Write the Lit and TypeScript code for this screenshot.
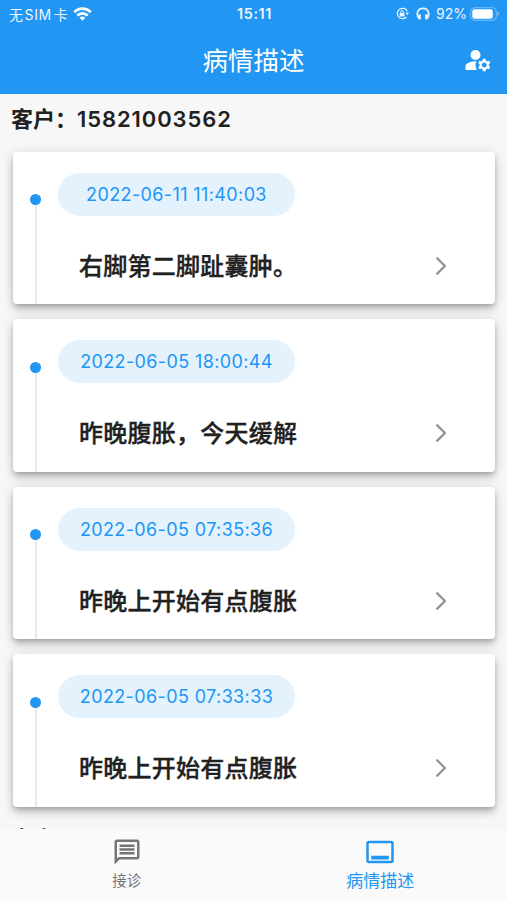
import { LitElement, html, css, svg } from "lit";
import { customElement, property } from "lit/decorators.js";

interface Entry {
  time: string;
  text: string;
}

const ENTRIES: Entry[] = [
  { time: "2022-06-11 11:40:03", text: "右脚第二脚趾囊肿。" },
  { time: "2022-06-05 18:00:44", text: "昨晚腹胀，今天缓解" },
  { time: "2022-06-05 07:35:36", text: "昨晚上开始有点腹胀" },
  { time: "2022-06-05 07:33:33", text: "昨晚上开始有点腹胀" },
];

const icon = (size: number, body: unknown) => html`
  <svg width=${size} height=${size} viewBox="0 0 24 24" fill="currentColor">${body}</svg>
`;

const manageAccounts = svg`
  <circle cx="10" cy="8" r="4"/>
  <path d="M10.67 13.02C10.45 13.01 10.23 13 10 13c-2.42 0-4.68.67-6.61 1.82C2.51 15.34 2 16.32 2 17.35V20h9.26C10.47 18.87 10 17.49 10 16c0-1.07.25-2.07.67-2.98z"/>
  <path d="M20.75 16c0-.22-.03-.42-.06-.63l1.14-1.01-1-1.73-1.45.49c-.32-.27-.68-.48-1.08-.63L18 11h-2l-.3 1.49c-.4.15-.76.36-1.08.63l-1.45-.49-1 1.73 1.14 1.01c-.03.21-.06.41-.06.63s.03.42.06.63l-1.14 1.01 1 1.73 1.45-.49c.32.27.68.48 1.08.63L16 21h2l.3-1.49c.4-.15.76-.36 1.08-.63l1.45.49 1-1.73-1.14-1.01c.03-.21.06-.41.06-.63zM17 18c-1.1 0-2-.9-2-2s.9-2 2-2 2 .9 2 2-.9 2-2 2z"/>`;

const message = svg`<path d="M4 4h16v12H5.17L4 17.17V4m0-2c-1.1 0-1.99.9-1.99 2L2 22l4-4h14c1.1 0 2-.9 2-2V4c0-1.1-.9-2-2-2H4zm2 10h12v2H6v-2zm0-3h12v2H6V9zm0-3h12v2H6V6z"/>`;

const callToAction = svg`<path d="M21 3H3c-1.1 0-2 .9-2 2v14c0 1.1.9 2 2 2h18c1.1 0 2-.9 2-2V5c0-1.1-.9-2-2-2zm0 16H3V5h18v14zM5 15h14v3H5z"/>`;

const chevron = svg`<path d="M6.23 20.23 8 22l10-10L8 2 6.23 3.77 14.46 12z"/>`;

@customElement("status-bar")
export class StatusBar extends LitElement {
  static styles = css`
    :host {
      display: grid;
      grid-template-columns: 1fr auto 1fr;
      align-items: center;
      height: 27px;
      padding: 0 7px 0 9px;
      font-size: 14px;
      color: #eaf5ff;
    }
    .side {
      display: flex;
      align-items: center;
    }
    .carrier {
      letter-spacing: 0.6px;
      margin-right: 5px;
    }
    .sim {
      margin: 0 2px 0 1px;
    }
    .time {
      font-weight: 600;
      font-size: 14.5px;
      letter-spacing: 0.55px;
    }
    .right {
      justify-content: flex-end;
    }
    .lock {
      margin-right: 7px;
    }
    .phones {
      margin-right: 6px;
    }
    .percent {
      margin-right: 3px;
    }
    svg {
      display: block;
    }
  `;

  render() {
    return html`
      <div class="side">
        <span class="carrier">无<span class="sim">SIM</span>卡</span>
        <svg width="19" height="14" viewBox="0 0 19 14" fill="none" stroke="#fff" stroke-width="2.7">
          <path d="M1.2 5.1a11.8 11.8 0 0 1 16.6 0" />
          <path d="M4.3 8.5a7.4 7.4 0 0 1 10.4 0" />
          <path d="M9.5 13.8 6.6 10.8a4.2 4.2 0 0 1 5.8 0z" fill="#fff" stroke="none" />
        </svg>
      </div>
      <span class="time">15:11</span>
      <div class="side right">
        <svg class="lock" width="13" height="13" viewBox="0 0 13 13" fill="none" stroke="currentColor">
          <path d="M11.2 4.2A5.2 5.2 0 1 0 10.4 10" stroke-width="1.3" />
          <path d="M9.6 5.6h3.4l-1.7 2.6z" fill="currentColor" stroke="none" />
          <rect x="3.7" y="5.9" width="4.8" height="3.6" rx=".5" fill="currentColor" stroke="none" />
          <path d="M4.8 6V4.9a1.3 1.3 0 0 1 2.6 0V6" stroke-width="1" />
        </svg>
        <svg class="phones" width="14" height="13" viewBox="0 0 14 13" fill="none" stroke="currentColor">
          <path d="M2.7 11C.2 8 .9 1.3 7 1.3S13.8 8 11.3 11" stroke-width="1.7" />
          <rect x="2.2" y="7.2" width="2.7" height="5.2" rx="1" fill="currentColor" stroke="none" />
          <rect x="9.1" y="7.2" width="2.7" height="5.2" rx="1" fill="currentColor" stroke="none" />
        </svg>
        <span class="percent">92%</span>
        <svg width="30" height="14" viewBox="0 0 30 14">
          <rect x=".7" y=".7" width="25.6" height="12.6" rx="3.8" fill="none" stroke="#7cc1f8" stroke-width="1" />
          <rect x="2.3" y="2.3" width="20.5" height="9.4" rx="2.2" fill="#fff" />
          <path d="M27.6 4.8v4.4c1-.4 1.6-1.2 1.6-2.2s-.6-1.8-1.6-2.2z" fill="#7cc1f8" />
        </svg>
      </div>
    `;
  }
}

@customElement("record-card")
export class RecordCard extends LitElement {
  @property() time = "";
  @property() text = "";

  static styles = css`
    :host {
      display: flex;
      height: 152.5px;
      background: #fff;
      border-radius: 4px;
      box-shadow: 0 3px 5px -1px rgba(0, 0, 0, 0.22), 0 6px 10px rgba(0, 0, 0, 0.14),
        0 1px 14px rgba(0, 0, 0, 0.1);
    }
    .rail {
      display: flex;
      flex-direction: column;
      align-items: center;
      width: 45px;
      padding-top: 42.5px;
      box-sizing: border-box;
    }
    .dot {
      flex: none;
      width: 11px;
      height: 11px;
      border-radius: 50%;
      background: #2196f3;
    }
    .line {
      flex: 1;
      width: 2px;
      background: #e8e8e8;
    }
    .body {
      flex: 1;
      padding-top: 21px;
    }
    .pill {
      display: flex;
      align-items: center;
      justify-content: center;
      width: 237px;
      height: 43px;
      border-radius: 21.5px;
      background: #e3f2fd;
      color: #2196f3;
      font-size: 18px;
      letter-spacing: 0.38px;
    }
    .row {
      display: flex;
      align-items: center;
      justify-content: space-between;
      height: 30px;
      margin-top: 35px;
      padding: 0 43px 0 21px;
    }
    .text {
      padding-top: 2px;
      font-size: 24px;
      line-height: 30px;
      font-weight: 500;
      -webkit-text-stroke: 0.35px #212121;
      letter-spacing: 0.25px;
      color: #212121;
      white-space: nowrap;
    }
    svg {
      display: block;
      color: #969696;
    }
  `;

  render() {
    return html`
      <div class="rail">
        <div class="dot"></div>
        <div class="line"></div>
      </div>
      <div class="body">
        <div class="pill">${this.time}</div>
        <div class="row"><span class="text">${this.text}</span>${icon(22, chevron)}</div>
      </div>
    `;
  }
}

@customElement("app-root")
export class AppRoot extends LitElement {
  static styles = css`
    :host {
      display: flex;
      flex-direction: column;
      height: 900px;
      overflow: hidden;
      background: #f7f7f7;
      font-family: Inter, "Noto Sans CJK SC", sans-serif;
    }
    .top {
      flex: none;
      height: 94px;
      background: #2196f3;
      color: #fff;
    }
    .appbar {
      display: grid;
      grid-template-columns: 1fr auto 1fr;
      align-items: center;
      height: 66px;
      padding: 0 14px;
    }
    .title {
      grid-column: 2;
      padding-top: 2px;
      font-size: 25.5px;
      line-height: 36px;
    }
    .action {
      justify-self: end;
    }
    svg {
      display: block;
    }
    .list {
      flex: 1;
      min-height: 0;
      overflow: hidden;
    }
    .client {
      display: flex;
      align-items: center;
      height: 50px;
      margin-bottom: 7.5px;
      padding-left: 11px;
      font-size: 22px;
      font-weight: 600;
      line-height: 30px;
      color: #212121;
    }
    .number {
      letter-spacing: 0.9px;
    }
    .cards {
      display: flex;
      flex-direction: column;
      gap: 15px;
      padding: 0 12px 7.5px 13px;
    }
    .tabs {
      flex: none;
      display: flex;
      height: 71px;
      background: #fafafa;
    }
    .tab {
      flex: 1;
      display: flex;
      flex-direction: column;
      align-items: center;
      padding-top: 8px;
      color: #757575;
      font-size: 14.5px;
      line-height: 28px;
    }
    .active {
      color: #2196f3;
      font-size: 17px;
    }
  `;

  render() {
    return html`
      <div class="top">
        <status-bar></status-bar>
        <div class="appbar">
          <span class="title">病情描述</span>
          <span class="action">${icon(30, manageAccounts)}</span>
        </div>
      </div>
      <div class="list">
        <div class="client"><span>客户：</span><span class="number">15821003562</span></div>
        <div class="cards">
          ${ENTRIES.map((e) => html`<record-card .time=${e.time} .text=${e.text}></record-card>`)}
        </div>
        <div class="client"><span>客户：</span></div>
      </div>
      <div class="tabs">
        <div class="tab">${icon(30, message)}<span>接诊</span></div>
        <div class="tab active">${icon(30, callToAction)}<span>病情描述</span></div>
      </div>
    `;
  }
}
